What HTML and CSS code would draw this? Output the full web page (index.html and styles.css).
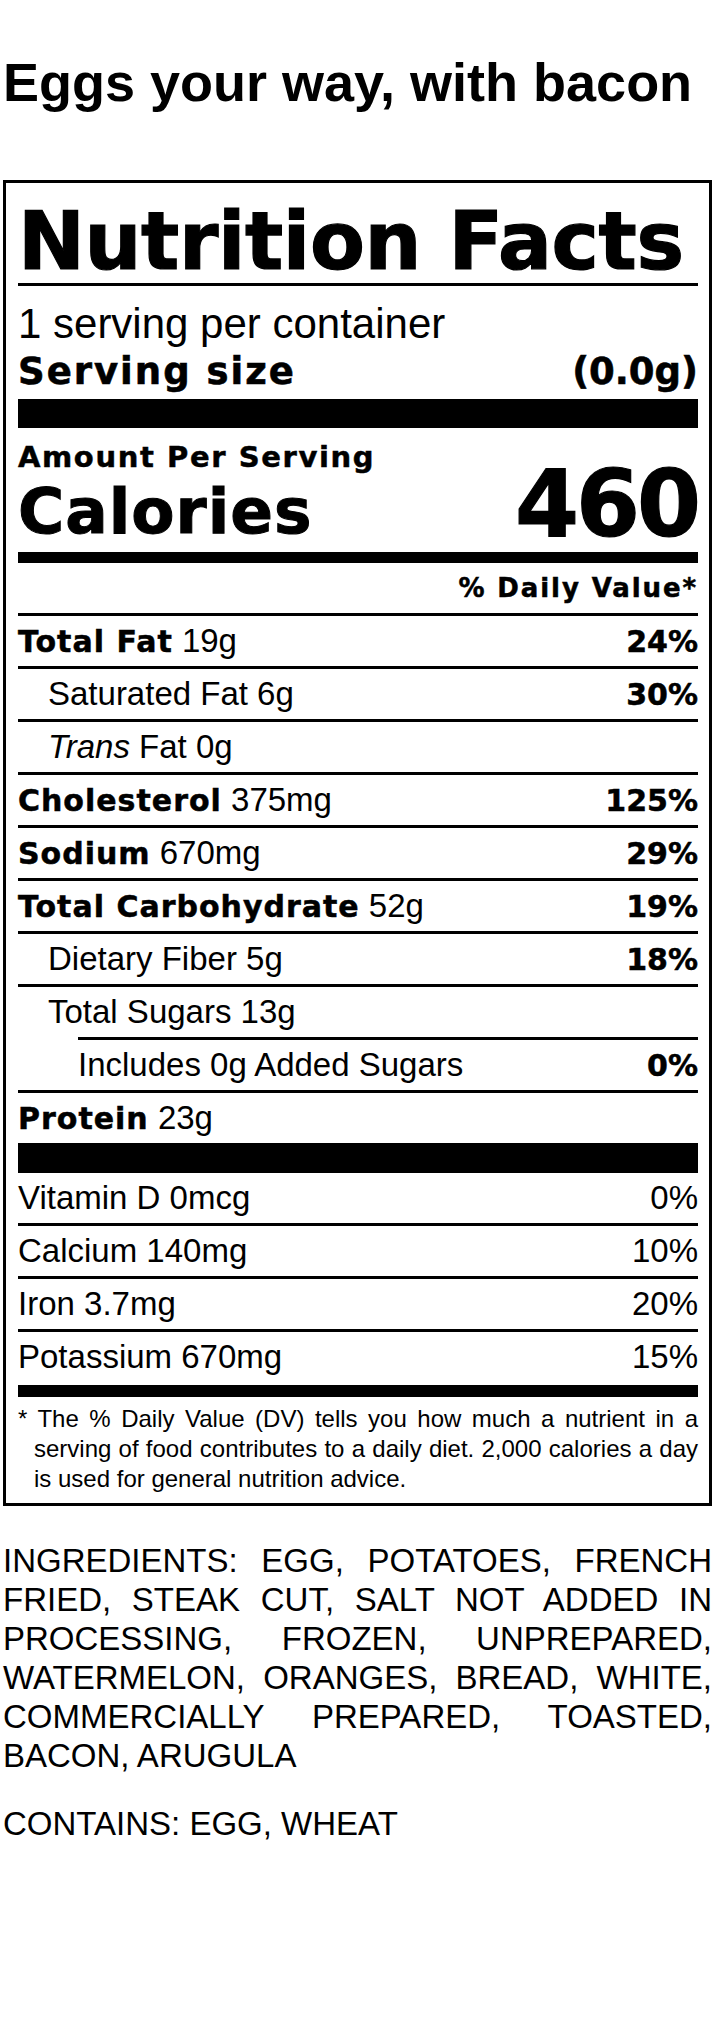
FILE: index.html
```html
<!DOCTYPE html>
<html lang="en">
<head>
<meta charset="utf-8">
<title>Eggs your way, with bacon</title>
<link rel="stylesheet" href="styles.css">
</head>
<body>
<main class="page">
  <h1 class="title">Eggs your way, with bacon</h1>
  <section class="label">
    <h2 class="label-title">Nutrition Facts</h2>
    <p class="servings-count">1 serving per container</p>
    <p class="serving-size"><span class="ss-label">Serving size</span><span>(0.0g)</span></p>
    <div class="bar bar-thick"></div>
    <div class="calories">
      <div class="calories-label">
        <p class="amount">Amount Per Serving</p>
        <p class="cal-word">Calories</p>
      </div>
      <p class="cal-value">460</p>
    </div>
    <div class="bar bar-medium"></div>
    <p class="dv-head">% Daily Value*</p>

    <div class="row"><span><b class="nm">Total Fat</b> 19g</span><b class="pct">24%</b></div>
    <div class="row"><span class="in1">Saturated Fat 6g</span><b class="pct">30%</b></div>
    <div class="row"><span class="in1"><i>Trans</i> Fat 0g</span></div>
    <div class="row"><span><b class="nm">Cholesterol</b> 375mg</span><b class="pct">125%</b></div>
    <div class="row"><span><b class="nm">Sodium</b> 670mg</span><b class="pct">29%</b></div>
    <div class="row"><span><b class="nm">Total Carbohydrate</b> 52g</span><b class="pct">19%</b></div>
    <div class="row"><span class="in1">Dietary Fiber 5g</span><b class="pct">18%</b></div>
    <div class="row"><span class="in1">Total Sugars 13g</span></div>
    <div class="row row-in2"><span>Includes 0g Added Sugars</span><b class="pct">0%</b></div>
    <div class="row"><span><b class="nm">Protein</b> 23g</span></div>
    <div class="bar bar-protein"></div>

    <div class="row row-first"><span>Vitamin D 0mcg</span><span>0%</span></div>
    <div class="row"><span>Calcium 140mg</span><span>10%</span></div>
    <div class="row"><span>Iron 3.7mg</span><span>20%</span></div>
    <div class="row"><span>Potassium 670mg</span><span>15%</span></div>
    <div class="bar bar-bottom"></div>

    <p class="footnote">* The % Daily Value (DV) tells you how much a nutrient in a serving of food contributes to a daily diet. 2,000 calories a day is used for general nutrition advice.</p>
  </section>

  <p class="ingredients">INGREDIENTS: EGG, POTATOES, FRENCH FRIED, STEAK CUT, SALT NOT ADDED IN PROCESSING, FROZEN, UNPREPARED, WATERMELON, ORANGES, BREAD, WHITE, COMMERCIALLY PREPARED, TOASTED, BACON, ARUGULA</p>
  <p class="contains">CONTAINS: EGG, WHEAT</p>
</main>
</body>
</html>
```

FILE: styles.css
```css
* {
  box-sizing: border-box;
}

html,
body {
  margin: 0;
  padding: 0;
  background: #fff;
  color: #000;
}

body {
  font-family: "Liberation Sans", Arial, sans-serif;
}

p {
  margin: 0;
}

.page {
  width: 712px;
  padding: 50px 0 0 3px;
}

.title {
  margin: 0;
  font: bold 54px/64px "Liberation Sans", Arial, sans-serif;
}

.label {
  margin-top: 66px;
  border: 3px solid #000;
  padding: 17px 11px 9px 12px;
}

.label-title {
  margin: 0;
  font: bold 80px/83px "DejaVu Sans", sans-serif;
  letter-spacing: -0.4px;
  -webkit-text-stroke: 1.2px #000;
  border-bottom: 3px solid #000;
}

.servings-count {
  padding-top: 13px;
  font-size: 42px;
  line-height: 50px;
}

.serving-size {
  display: flex;
  justify-content: space-between;
  align-items: baseline;
  font: bold 37px/46px "DejaVu Sans", sans-serif;
  -webkit-text-stroke: 0.6px #000;
}

.ss-label {
  letter-spacing: 2px;
}

.bar {
  background: #000;
}

.bar-thick {
  height: 29px;
  margin-top: 4px;
}

.calories {
  display: flex;
  justify-content: space-between;
  align-items: flex-end;
  margin-top: 11px;
  font-family: "DejaVu Sans", sans-serif;
  font-weight: bold;
}

.amount {
  font-size: 29px;
  line-height: 36px;
  letter-spacing: 1.6px;
  -webkit-text-stroke: 0.5px #000;
}

.cal-word {
  font-size: 63px;
  line-height: 73px;
  letter-spacing: 1px;
  -webkit-text-stroke: 1px #000;
}

.cal-value {
  font-size: 92px;
  line-height: 87px;
  letter-spacing: -3px;
  -webkit-text-stroke: 1.2px #000;
}

.bar-medium {
  height: 11px;
  margin-top: 4px;
}

.dv-head {
  text-align: right;
  font: bold 26px/50px "DejaVu Sans", sans-serif;
  letter-spacing: 1.9px;
  -webkit-text-stroke: 0.5px #000;
}

.row {
  display: flex;
  justify-content: space-between;
  align-items: baseline;
  height: 53px;
  border-top: 3px solid #000;
  font-size: 33px;
  line-height: 50px;
}

.row-first {
  height: 50px;
  border-top: 0;
}

.nm {
  font: bold 30px/1 "DejaVu Sans", sans-serif;
  letter-spacing: 1px;
  -webkit-text-stroke: 0.5px #000;
}

.pct {
  font: bold 30px/1 "DejaVu Sans", sans-serif;
  -webkit-text-stroke: 0.5px #000;
}

.in1 {
  padding-left: 30px;
}

.row-in2 {
  margin-left: 60px;
}

.bar-protein {
  height: 30px;
}

.bar-bottom {
  height: 12px;
  margin-top: 3px;
}

.footnote {
  margin-top: 7px;
  padding-left: 16px;
  text-indent: -16px;
  font-size: 24px;
  line-height: 30px;
  text-align: justify;
}

.ingredients {
  margin-top: 35px;
  font-size: 33px;
  line-height: 39px;
  text-align: justify;
}

.contains {
  margin-top: 29px;
  font-size: 33px;
  line-height: 39px;
}
```
